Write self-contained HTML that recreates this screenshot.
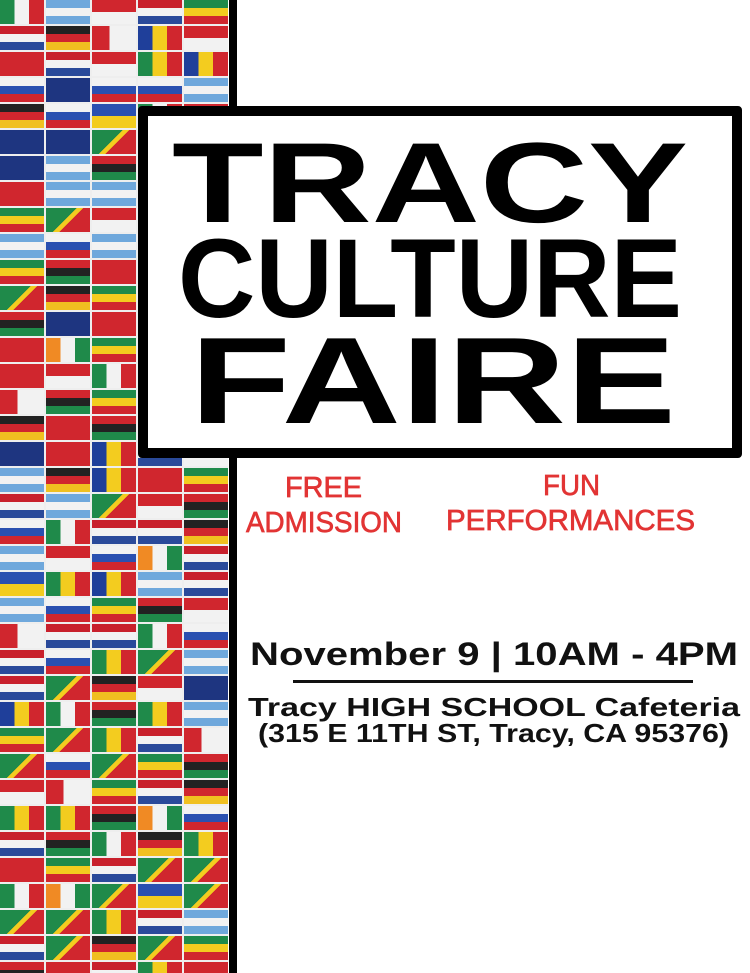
<!DOCTYPE html>
<html><head><meta charset="utf-8">
<style>
html,body{margin:0;padding:0;background:#fff;width:750px;height:973px;overflow:hidden;}
body{position:relative;font-family:"Liberation Sans",sans-serif;}
#g{position:absolute;left:0;top:0;width:228px;height:973px;overflow:hidden;display:grid;grid-template-columns:repeat(5,44px);grid-auto-rows:24px;gap:2px 2px;background:#eee;}
#g i{display:block;}
.a{background:linear-gradient(#c8202c 33%,#f2f2f2 33% 66%,#2a4a9a 66%)}
.b{background:linear-gradient(90deg,#1f8a4a 33%,#f2f2f2 33% 66%,#d0262e 66%)}
.c{background:linear-gradient(#222 33%,#d0262e 33% 66%,#f0c020 66%)}
.d{background:linear-gradient(90deg,#1f3f9a 33%,#f3cc1f 33% 66%,#d0262e 66%)}
.e{background:linear-gradient(#f2f2f2 33%,#2a50b0 33% 66%,#d0262e 66%)}
.f{background:linear-gradient(#6fa8dc 33%,#f2f2f2 33% 66%,#6fa8dc 66%)}
.g{background:linear-gradient(#1f8a4a 33%,#f3cc1f 33% 66%,#d0262e 66%)}
.h{background:linear-gradient(90deg,#1f8a4a 33%,#f3cc1f 33% 66%,#d0262e 66%)}
.k{background:linear-gradient(#d0262e 50%,#f2f2f2 50%)}
.l{background:linear-gradient(90deg,#f08a24 33%,#f2f2f2 33% 66%,#1f8a4a 66%)}
.m{background:linear-gradient(#d0262e 33%,#222 33% 66%,#1f8a4a 66%)}
.n{background:#1e3580}
.o{background:linear-gradient(135deg,#1f8a4a 45%,#f3cc1f 45% 55%,#d0262e 55%)}
.p{background:linear-gradient(#2a50b0 50%,#f3cc1f 50%)}
.q{background:#d0262e}
.r{background:linear-gradient(90deg,#d0262e 40%,#f2f2f2 40%)}
#vl{position:absolute;left:229px;top:0;width:8px;height:973px;background:#000;}
#box{position:absolute;left:138px;top:106px;width:584px;height:332px;border:10px solid #000;border-radius:4px;background:#fff;}
svg{position:absolute;left:0;top:0;}
</style></head><body>
<div id="g">
<i class="b"></i><i class="f"></i><i class="k"></i><i class="a"></i><i class="g"></i>
<i class="a"></i><i class="c"></i><i class="r"></i><i class="d"></i><i class="k"></i>
<i class="q"></i><i class="a"></i><i class="k"></i><i class="h"></i><i class="d"></i>
<i class="e"></i><i class="n"></i><i class="e"></i><i class="e"></i><i class="f"></i>
<i class="c"></i><i class="e"></i><i class="p"></i><i class="b"></i><i class="k"></i>
<i class="n"></i><i class="n"></i><i class="o"></i><i class="a"></i><i class="g"></i>
<i class="n"></i><i class="f"></i><i class="m"></i><i class="c"></i><i class="e"></i>
<i class="q"></i><i class="f"></i><i class="f"></i><i class="h"></i><i class="a"></i>
<i class="g"></i><i class="o"></i><i class="k"></i><i class="l"></i><i class="d"></i>
<i class="f"></i><i class="e"></i><i class="f"></i><i class="b"></i><i class="k"></i>
<i class="g"></i><i class="m"></i><i class="q"></i><i class="c"></i><i class="a"></i>
<i class="o"></i><i class="c"></i><i class="g"></i><i class="e"></i><i class="h"></i>
<i class="m"></i><i class="n"></i><i class="q"></i><i class="p"></i><i class="k"></i>
<i class="q"></i><i class="l"></i><i class="g"></i><i class="a"></i><i class="d"></i>
<i class="q"></i><i class="k"></i><i class="b"></i><i class="f"></i><i class="c"></i>
<i class="r"></i><i class="m"></i><i class="g"></i><i class="e"></i><i class="h"></i>
<i class="c"></i><i class="q"></i><i class="m"></i><i class="k"></i><i class="e"></i>
<i class="n"></i><i class="q"></i><i class="d"></i><i class="a"></i><i class="k"></i>
<i class="f"></i><i class="c"></i><i class="d"></i><i class="q"></i><i class="g"></i>
<i class="a"></i><i class="f"></i><i class="o"></i><i class="k"></i><i class="m"></i>
<i class="e"></i><i class="b"></i><i class="a"></i><i class="a"></i><i class="c"></i>
<i class="f"></i><i class="k"></i><i class="e"></i><i class="l"></i><i class="a"></i>
<i class="p"></i><i class="h"></i><i class="d"></i><i class="f"></i><i class="a"></i>
<i class="f"></i><i class="e"></i><i class="g"></i><i class="m"></i><i class="k"></i>
<i class="r"></i><i class="a"></i><i class="a"></i><i class="b"></i><i class="e"></i>
<i class="a"></i><i class="e"></i><i class="h"></i><i class="o"></i><i class="f"></i>
<i class="a"></i><i class="o"></i><i class="c"></i><i class="k"></i><i class="n"></i>
<i class="d"></i><i class="b"></i><i class="m"></i><i class="h"></i><i class="f"></i>
<i class="g"></i><i class="o"></i><i class="h"></i><i class="a"></i><i class="r"></i>
<i class="o"></i><i class="e"></i><i class="o"></i><i class="g"></i><i class="m"></i>
<i class="k"></i><i class="r"></i><i class="g"></i><i class="a"></i><i class="c"></i>
<i class="h"></i><i class="h"></i><i class="m"></i><i class="l"></i><i class="e"></i>
<i class="a"></i><i class="m"></i><i class="b"></i><i class="c"></i><i class="h"></i>
<i class="q"></i><i class="g"></i><i class="a"></i><i class="o"></i><i class="o"></i>
<i class="b"></i><i class="l"></i><i class="o"></i><i class="p"></i><i class="o"></i>
<i class="o"></i><i class="o"></i><i class="h"></i><i class="a"></i><i class="f"></i>
<i class="a"></i><i class="o"></i><i class="c"></i><i class="o"></i><i class="g"></i>
<i class="m"></i><i class="k"></i><i class="a"></i><i class="h"></i><i class="q"></i>
</div>
<div id="vl"></div>
<div id="box"></div>
<svg width="750" height="973" xmlns="http://www.w3.org/2000/svg">
<g font-family="Liberation Sans, sans-serif" font-weight="bold" fill="#000">
<text x="172" y="222" font-size="114" textLength="516" lengthAdjust="spacingAndGlyphs">TRACY</text>
<text x="178" y="317" font-size="112" textLength="504" lengthAdjust="spacingAndGlyphs">CULTURE</text>
<text x="190" y="423" font-size="123" textLength="486" lengthAdjust="spacingAndGlyphs">FAIRE</text>
</g>
<g font-family="Liberation Sans, sans-serif" fill="#e23434" stroke="#e23434" stroke-width="0.7" font-size="29">
<text x="285" y="497" textLength="77" lengthAdjust="spacingAndGlyphs">FREE</text>
<text x="246" y="532" textLength="156" lengthAdjust="spacingAndGlyphs">ADMISSION</text>
<text x="543" y="495" textLength="57" lengthAdjust="spacingAndGlyphs">FUN</text>
<text x="446" y="530" textLength="249" lengthAdjust="spacingAndGlyphs">PERFORMANCES</text>
</g>
<g font-family="Liberation Sans, sans-serif" font-weight="bold" fill="#111">
<text x="250" y="665" font-size="32" textLength="488" lengthAdjust="spacingAndGlyphs">November 9 | 10AM - 4PM</text>
<rect x="293" y="680" width="400" height="3"/>
<text x="248" y="716" font-size="26" textLength="492" lengthAdjust="spacingAndGlyphs">Tracy HIGH SCHOOL Cafeteria</text>
<text x="258" y="742" font-size="26" textLength="471" lengthAdjust="spacingAndGlyphs">(315 E 11TH ST, Tracy, CA 95376)</text>
</g>
</svg>
</body></html>
